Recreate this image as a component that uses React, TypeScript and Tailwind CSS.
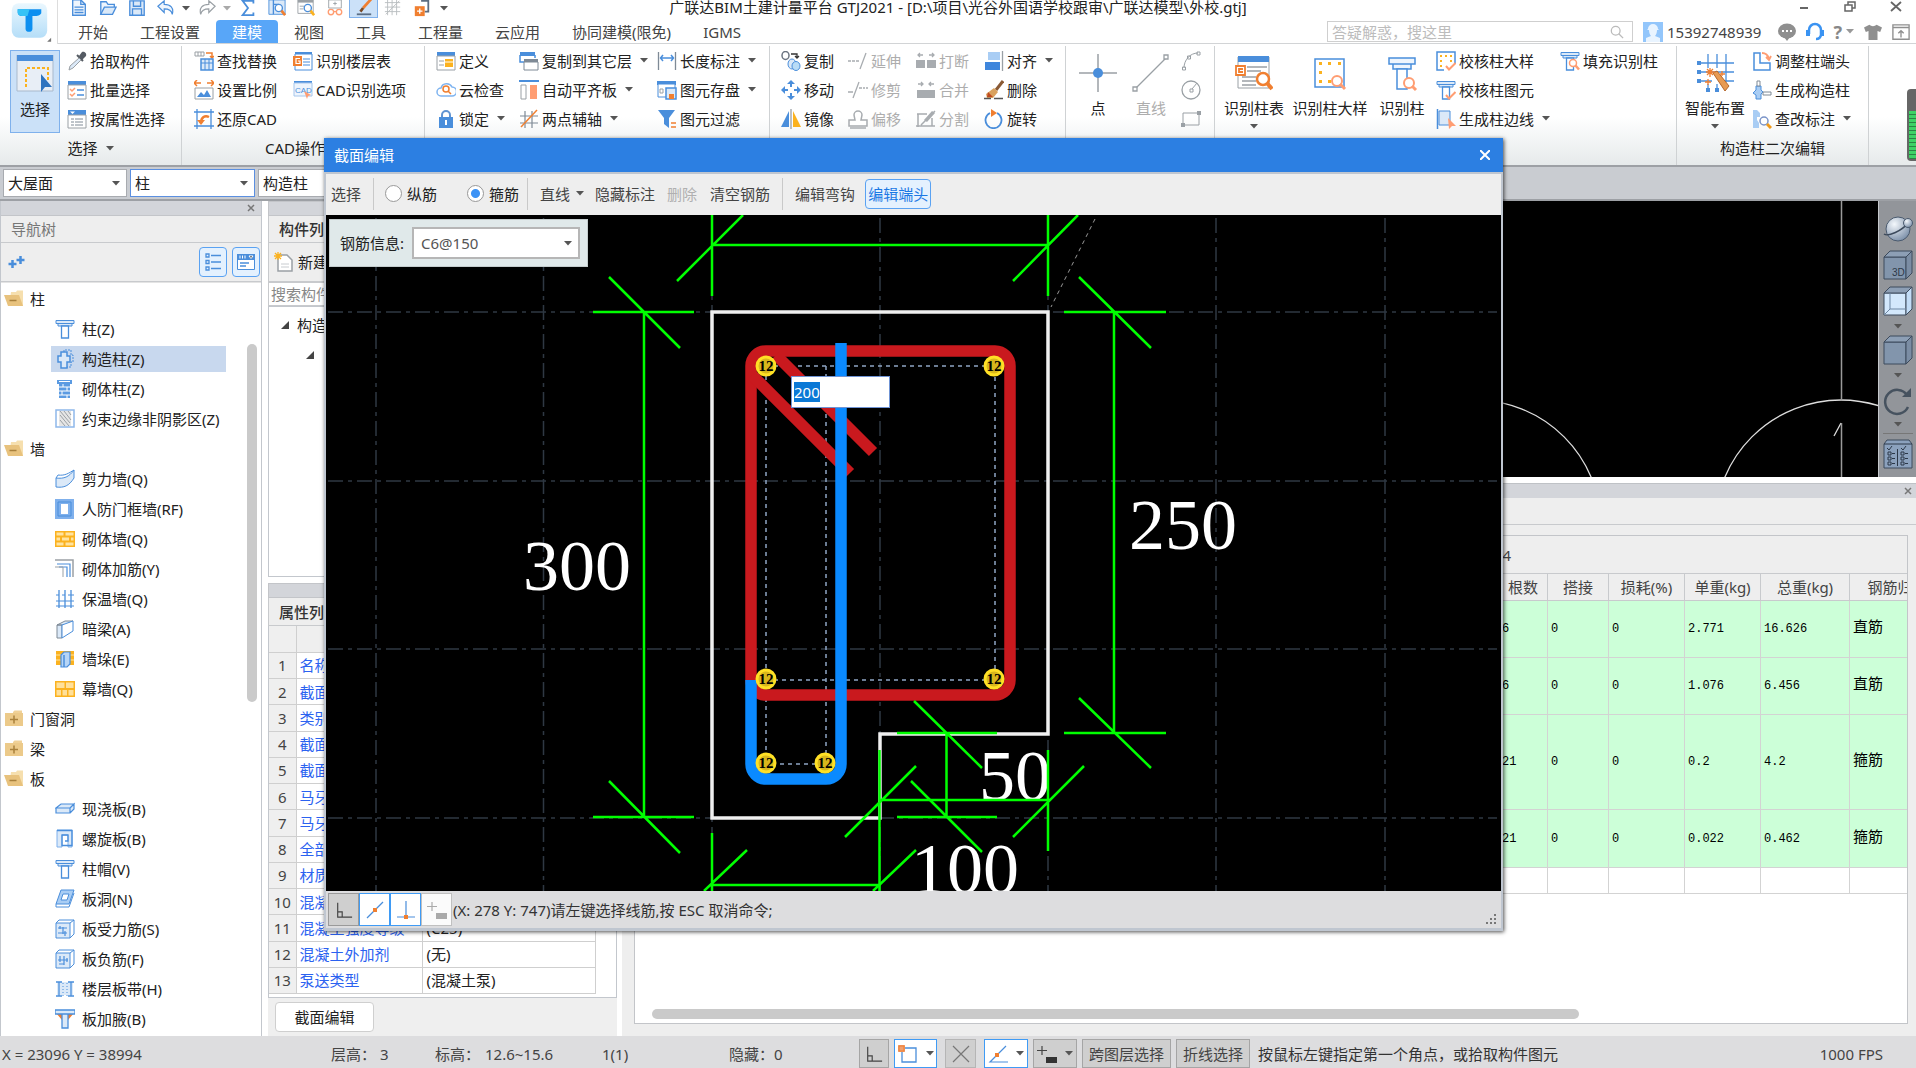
import { useEffect, useRef, type ReactNode } from "react";

const B = "#4a8edb";
const L = "#dbe9f8";
const O = "#f07f30";
const S = "#ff9d72";
const G = "#9aa0a5";
const Y = "#fbb21f";

const line = (d: string, c = B, w = 1.5) => <path d={d} fill="none" stroke={c} strokeWidth={w} />;
const fill = (d: string, c = B) => <path d={d} fill={c} />;

const column = (
  <>
    <path d="M1 1.500h18v3H1zM3 4.500h14v2.500H3z" fill={L} stroke={B} />
    <path d="M6.500 7h7v12h-7z" fill="#fff" stroke={B} strokeWidth="1.300" />
  </>
);
const lens = (
  <>
    <circle cx="13" cy="12" r="3.500" fill="#fff" stroke={S} strokeWidth="1.500" />
    {line("M15.500 14.500L19 18.500", S, 2.5)}
  </>
);
const tick = line("M10 15l3 3.500L19.500 12", S, 2);
const folderOpen = (
  <>
    {fill("M7 3h5l1-1.500h6V17H5z", "#f6dfae")}
    {fill("M0 6h15l4 11H4z", "#e8c27d")}
    {line("M5.500 11.500h7", "#a9813c", 1.5)}
  </>
);
const folderShut = (
  <>
    {fill("M9 3l1.500-1.500H18V4H9z", "#f0d197")}
    {fill("M1 4h18v13H1z", "#ecca8a")}
    {line("M6 10.500h8M10 6.500v8", "#a9813c", 1.5)}
  </>
);
const bricks = (
  <>
    {fill("M0 2h20v16H0z", "#fbb21f")}
    {fill("M1.500 3.500h7v3h-7zM10.500 3.500h8v3h-8zM1.500 8.500h3.500v3H1.500zM7 8.500h7v3H7zM16 8.500h2.500v3H16zM1.500 13.500h7v3h-7zM10.500 13.500h8v3h-8z", "#ffe3a0")}
  </>
);
const cubeFrame = (
  <>
    <path d="M1 4h14v15H1z" fill={L} stroke={B} />
    <path d="M1 4l3-3h15v14l-4 4M15 4l4-3" fill="none" stroke={B} />
  </>
);

const icons: Record<string, ReactNode> = {
  fileNew: <><path d="M3 1h9l5 5v12H3z" fill="#eef5fd" stroke={B} strokeWidth="1.500" />{line("M5 9h10M5 12h10M5 15h10M12 1v5h5")}</>,
  open: <><path d="M2 17V3h6l2 3h7v3" fill="#eef5fd" stroke={B} strokeWidth="1.500" /><path d="M2 17L6 9h13l-4 8z" fill={L} stroke={B} strokeWidth="1.500" /></>,
  save: <><path d="M2 2h16v16H2z" fill={L} stroke={B} strokeWidth="1.500" />{line("M6 2v6h8V2M5 18v-7h10v7")}</>,
  undo: <path d="M1 8l7-6v4c7 0 11 4 9 11-1-5-4-6-9-6v4z" fill="#eef5fd" stroke={B} strokeWidth="1.300" />,
  redo: <path d="M19 8l-7-6v4C5 6 1 10 3 17c1-5 4-6 9-6v4z" fill="#fff" stroke={G} strokeWidth="1.300" />,
  sigma: <path d="M16 5V2H4l6 8-6 8h12v-3" fill="none" stroke={B} strokeWidth="2" />,
  findDoc: <><path d="M1 1h18v16H1z" fill={L} stroke={B} />{line("M6 1v16M6 6h6", B)}<circle cx="12" cy="10" r="4" fill="#fff" stroke={B} strokeWidth="1.500" />{line("M15 13l4 5", O, 3)}</>,
  findView: <><path d="M1 1h17v15H1z" fill="#fff" stroke={G} />{fill("M1 1h17v3H1z", G)}{line("M3 8h5M3 11h4", G, 1)}<circle cx="12" cy="10" r="4" fill="#fff" stroke={B} strokeWidth="1.500" />{line("M15 13l4 5", Y, 3)}</>,
  glasses: <><path d="M3 1h14v9H3z" fill="#fff" stroke={G} />{line("M8 5h4M10 3v4", G, 1)}<circle cx="5.500" cy="14.500" r="3" fill="#fff" stroke={S} strokeWidth="1.500" /><circle cx="14.500" cy="14.500" r="3" fill="#fff" stroke={S} strokeWidth="1.500" />{line("M8.500 14h3", S)}</>,
  brush: <>{line("M18 0L9 10", O, 3)}{line("M9 10l-3 4", "#7a4a26", 3)}{line("M2 17h16", "#5c6f86", 2)}</>,
  gridGray: <>{line("M4 1v17M9 1v17M14 1v17M1 4h17M1 9h17M1 14h17M2 17L17 2", "#b8bcc0", 1)}</>,
  addBox: <>{line("M9 2h8v12h-4", "#5d6d80", 2)}{fill("M2 8h11v11H2z", O)}{line("M7.500 10.500v6M4.500 13.500h6", "#fff", 1.5)}</>,
  picker: <>{fill("M12 5l3-4c2-1 5 1 4 4l-4 4z", "#555b63")}{line("M10 4l6 6", "#555b63", 2)}<path d="M12 7l2 2-8 8-4 2 1-4z" fill={L} stroke={G} /></>,
  batch: <>{fill("M1 1h18v5H1z")}<path d="M1 5h18v14H1z" fill="#fff" stroke={G} />{line("M3 9l2 2 3-3M3 14l2 2 3-3", S, 1.5)}{line("M10 10h7M10 15h7", B)}</>,
  byProp: <>{fill("M1 1h18v6H1z")}<path d="M1 6h18v13H1z" fill="#fff" stroke={G} />{fill("M3 2.500h5L5.500 5z", "#fff")}{line("M4 10h3M8 10h8M4 13h3M8 13h8M4 16h3M8 16h8", "#7f8a96", 1)}</>,
  replace: <>{line("M1 1h9v4H1zM4 1v4M7 1v4", G, 1)}{line("M12 2h6v5M16 5l2 2 2-2", O, 1.5)}<path d="M7 8h12v11H7z" fill={L} stroke={B} strokeWidth="1.500" />{line("M7 12h12M11 8v11M15 8v11", B, 1)}</>,
  scale: <>{line("M0 3h7M3 0L0 3l3 3M13 3h7M17 0l3 3-3 3", O, 1.5)}<path d="M1 8h18v11H1z" fill="#fff" stroke={G} />{fill("M3 17l4-5 3 3 3-5 4 7z")}</>,
  restore: <>{line("M3 0v20M0 3h20M17 0v20M0 17h20", B, 1.3)}{line("M7 14c0-6 4-8 8-6", O, 2.5)}{fill("M3 11h8l-4 5z", O)}</>,
  floorTable: <>{fill("M2 1h17v3H2z")}<path d="M2 3h17v16H2z" fill="#fff" stroke={B} />{line("M10 8h7M10 11h7M10 14h7", B, 1.2)}{fill("M0 5h9v10H0z", O)}{line("M7 7.500H3v5h4V10H5", "#fff", 1.2)}</>,
  cadOpt: <>{fill("M1 1h18v3H1z")}<path d="M1 3h18v13H1z" fill="#eef5fd" stroke="#a6c6ec" /><text x="2" y="13" fontSize="8" fill={B} fontFamily="Liberation Sans">CAD</text>{fill("M11 11l7 4-3 1-1 3z", S)}</>,
  define: <>{fill("M1 1h18v5H1z")}<path d="M1 5h18v14H1z" fill="#fff" stroke={G} />{line("M3 10h5M3 14h5", G, 1)}{fill("M9 8h8v8H9z", Y)}{line("M9 11h8", "#fff", 1)}</>,
  cloud: <><path d="M5 16a4 4 0 010-8 6 6 0 0111-1 4.500 4.500 0 010 9z" fill="#fff" stroke="#7fb4f0" strokeWidth="1.500" /><circle cx="10" cy="9" r="3" fill="none" stroke={O} strokeWidth="1.500" />{line("M12 11l3 3", O, 1.5)}</>,
  lock: <><path d="M6 9V6a4 4 0 018 0v3" fill="none" stroke="#5f93d2" strokeWidth="2" />{fill("M3 8h14v11H3z", "#4a8edb")}{line("M10 11v5", "#fff", 2)}</>,
  copyLayer: <>{fill("M1 1h15v4H1z")}<path d="M1 4v7h4M16 4v3" fill="none" stroke={B} strokeWidth="1.500" />{fill("M5 8h14v4H5z", "#7f8a96")}<path d="M5 11h14v8H5z" fill="#fff" stroke="#7f8a96" /></>,
  alignSlab: <>{line("M0 1h20", B, 2)}<path d="M2 5h5v14H2z" fill="#fff" stroke={G} />{fill("M11 5h7v14h-7z", S)}</>,
  axis: <>{line("M6 2v17M13 2v17M1 7h18M1 14h18", "#7f8a96", 1.2)}{line("M2 18L18 1", O, 1.5)}</>,
  dimension: <>{line("M1.500 1v18M18.500 1v18", "#7f8a96", 1.3)}{line("M4 7h12M6 4L3.500 7 6 10M14 4l2.500 3-2.500 3", B, 1.5)}</>,
  store: <>{fill("M0 1h19v4H0z")}<path d="M1 4h17v13H1z" fill="#fff" stroke={B} />{line("M3 9h3v4H3z", G, 1)}<path d="M9 8h10v11H9z" fill={L} stroke={B} strokeWidth="1.500" />{fill("M12 14h5v5h-5z", O)}</>,
  filter: <>{fill("M1 1h17l-6 8v10l-5-4V9z", "#4a8edb")}{line("M14 14h5M14 18h5", O, 1.5)}</>,
  copy: <><ellipse cx="4.500" cy="4.500" rx="3.500" ry="4" fill="none" stroke="#6b7480" strokeWidth="1.500" />{line("M10 3h6v4M14 5l2 2 2-2", "#333", 1.3)}<ellipse cx="11" cy="13" rx="4" ry="5" fill={L} stroke={B} /><ellipse cx="15" cy="15" rx="4" ry="4.500" fill="#b9dcf6" stroke={B} /></>,
  move: <>{line("M10 2v5M10 13v5M2 10h5M13 10h5", B, 2)}{fill("M10 0l4 4H6zM10 20l4-4H6zM0 10l4-4v8zM20 10l-4-4v8z")}</>,
  mirror: <>{fill("M8 2v16H0z", "#4a8edb")}{line("M10 0v20", G, 1.3)}{fill("M12 2v16h8z", Y)}</>,
  extend: <>{line("M0 10h3M4 10h3M8 10h3", "#a8acb0", 1.3)}{line("M18 2L12 18", "#a8acb0", 1.3)}</>,
  trim: <>{line("M0 12h5M11 8h3M15 8h2M18 8h2", "#a8acb0", 1.3)}{line("M11 2L5 18", "#a8acb0", 1.3)}</>,
  offset: <><path d="M6 6a4 4 0 118 0l-1 5h6v6H1v-6h6z" fill="#fff" stroke="#a8acb0" strokeWidth="1.500" />{line("M2 19h16", "#a8acb0", 1.5)}</>,
  breakIt: <>{fill("M0 9h9v8H0zM11 9h9v8h-9z", "#a8acb0")}{line("M2 4h5M4 2L2 4l2 2M13 4h5M16 2l2 2-2 2", "#a8acb0", 1.3)}</>,
  merge: <>{fill("M1 10h18v8H1z", "#a8acb0")}{line("M2 4h5M5 2l2 2-2 2M13 4h5M15 2l-2 2 2 2", "#a8acb0", 1.3)}</>,
  split: <>{line("M1 5h10M2 5v13M0 17h19M16 9v8M5 16L19 2", "#a8acb0", 1.5)}{fill("M8 11l8-9 3 2-8 9z", "#a8acb0")}</>,
  align: <>{line("M18.500 0v20", G, 1.3)}{fill("M4 1h12v8H4z", "#a9cdf4")}{fill("M1 11h15v8H1z", "#3f86dc")}</>,
  erase: <>{line("M19 1l-7 9", "#8a5a35", 3)}{fill("M10 8l4 4-5 6H3l-1-4z", "#d9a15e")}{fill("M4 12l5 5H3z", "#c04a20")}{line("M0 18.500h7M10 18.500h9", "#555", 1.3)}</>,
  rotate: <><path d="M6 4a8 8 0 107 0" fill="none" stroke={B} strokeWidth="1.800" />{fill("M7 0l6 4-6 4z", O)}</>,
  arc: <>{line("M3 17C3 9 9 2 17 2", G, 1)}{line("M1.500 16h3v3h-3zM6.500 5h3v3h-3zM16 1h3v3h-3z", G, 1)}</>,
  circle: <><circle cx="10" cy="10" r="9" fill="none" stroke={G} strokeWidth="1.300" />{line("M9 9h3v3H9zM11 9l5-6", G, 1)}</>,
  rect: <>{line("M2 4h16v12H2z", G, 1)}{fill("M0 14h4v4H0zM16 2h4v4h-4z", G)}</>,
  checkDetail: <><path d="M1 1h18v18H1z" fill="#fff" stroke={B} strokeWidth="1.500" />{fill("M4 4h2v2H4zM9 4h2v2H9zM14 4h2v2h-2zM4 9h2v2H4zM14 9h2v2h-2zM4 14h2v2H4z", Y)}{fill("M8 13h12v7H8z", "#fff")}{tick}</>,
  checkCol: <>{column}{tick}</>,
  edgeLine: <><path d="M3 2h11v14H3z" fill={L} stroke={B} /><path d="M1.500 0v20" stroke={B} strokeWidth="1.500" />{fill("M12 9l8 8h-4l-3 3z", S)}</>,
  fillCol: <>{column}{lens}</>,
  adjustEnd: <><path d="M2 2h6v10h10v7H2z" fill="#fff" stroke={B} strokeWidth="1.500" />{line("M10 2c4 0 6 2 7 6M14 6l3 3 2-4", S, 1.8)}</>,
  genCol: <><path d="M4 6h5v4l2 2-2 2v5H4v-4l-3-2 3-3z" fill="#a9cdf4" stroke={B} /><path d="M5 1h3v5H5zM11 12h8v3h-8z" fill="#fff" stroke="#7f8a96" /></>,
  checkDim: <>{fill("M1 1h4l3 3v4H5v3l2 3v5H1z", "#a9cdf4")}<circle cx="12" cy="12" r="4" fill="#fff" stroke="#7a94c8" strokeWidth="1.500" />{line("M15 15l4 4", "#f09a1a", 3)}</>,
  folderOpen,
  folderShut,
  column,
  structCol: <><path d="M9 3V1h7v5h2v7h-2v5h-4" fill="none" stroke={B} strokeDasharray="2 1" /><path d="M6 3h6v4h3v6h-3v6H6v-6H3V7h3z" fill={L} stroke={B} strokeWidth="1.500" /></>,
  brickCol: <>{fill("M2 1h15v4H2zM4 5h11v14H4z", "#5b9be2")}{line("M4 8h11M4 12h11M4 16h11M8 5v3M12 8v4M7 12v4M12 16v3", "#fff", 1)}{line("M4 2.500h11", "#fff", 1)}</>,
  hatch: <><path d="M1 1h18v17H1z" fill="#fff" stroke="#8fb8ea" strokeWidth="1.500" />{fill("M4 2h12v15H4z", "#e5e5e5")}{line("M5 2l10 12M5 6l9 11M5 11l5 6M9 2l7 9M13 2l3 4", G, 1)}</>,
  shear: <><path d="M1 9c8 1 13-1 18-8v8C14 17 9 19 1 18z" fill={L} stroke={B} /><path d="M1 9l2-3c7 1 11-2 16-5" fill="none" stroke={B} /></>,
  frameWall: <>{fill("M0 0h19v20H0z", "#7fb0ec")}{line("M3 3h13v14H3z", "#4a8edb", 1)}{fill("M6 5h7v10H6z", "#fff")}</>,
  bricks,
  rebarWall: <>{line("M0 1h18v17", G, 1.5)}{line("M2 5h13v13M4 8h8v10", B, 1.2)}{line("M0 8h8v10", G, 1)}</>,
  insul: <>{line("M4 1v18M10 1v18M16 1v18", B, 1.3)}{line("M1 6h3M7 6h3M13 6h6M1 12h18M1 17h18", B, 1)}</>,
  hiddenBeam: <><path d="M2 6l8-4h8l-8 4zM2 6h5v13H2z" fill={L} stroke="#7f8a96" /><path d="M7 6l11-4v10L7 19z" fill="#fff" stroke={B} /></>,
  pier: <>{fill("M1 2h18v14H1z", "#fbb21f")}{line("M1 6h18M1 11h18", "#ffe3a0", 1)}<path d="M6 6l3-3h6v12l-3 3H6z" fill="#b6d5f6" stroke={B} strokeWidth="1.200" />{line("M9 6v12", B)}</>,
  curtain: <>{fill("M0 2h20v16H0z", "#fbb21f")}{fill("M1.500 3.500h8v5.500h-8zM11 3.500h7.500v5.500H11zM1.500 11h4.500v5.500H1.500zM7.500 11h4.500v5.500H7.500zM13.500 11h5v5.500h-5z", "#ffe09a")}</>,
  slab: <path d="M1 9l5-4h13l-4 4zM1 9h14v5H1zM15 9l4-4v5l-4 4" fill={L} stroke={B} strokeWidth="1.200" />,
  spiral: <><path d="M2 1h15v17h-4V6H7v12H2z" fill={L} stroke="#7fb0ec" />{line("M2 1.500h15v15H7V6h6v6h-3", B, 1.3)}</>,
  slabHole: <><path d="M6 1h13l-5 14H1z" fill="#a9cdf4" stroke={B} /><path d="M1 15v3h13l5-14" fill="none" stroke={B} /><path d="M8 5h6l-2 6H6z" fill="#fff" stroke={B} /></>,
  slabRebar: <>{cubeFrame}{line("M3 9h9M3 14h9M5 7v3M10 12v5M8 8v7", B, 1.2)}</>,
  slabNeg: <>{cubeFrame}{line("M3 11h10M5 7v6M9 7v9M12 9v4M4 15h5", B, 1.2)}</>,
  band: <>{fill("M2 3h16v13H2z", L)}{line("M1 3h6M13 3h6M1 17h6M13 17h6M4 3v14M16 3v14", B, 1.3)}<path d="M8 4v13M12 4v13" stroke={B} strokeDasharray="1 2" /></>,
  haunch: <>{fill("M1 4l6 7V4zM19 4l-6 7V4z", O)}<path d="M0 1h20v4H0zM7 5h6v14H7z" fill={L} stroke={B} strokeWidth="1.300" /></>,
  newDoc: <><path d="M4 3h9l5 5v11H4z" fill="#fff" stroke={G} strokeWidth="1.500" />{line("M7 12h8M7 15h8", "#c8ccd0", 1)}{line("M4 0v8M0 4h8M1 1l6 6M7 1L1 7", Y, 1.3)}</>,
  ortho: <>{line("M3 2v16h16M3 12h5v6", "#444", 1.3)}</>,
  snapBox: <><path d="M4 4h14v14H4z" fill="#fff" stroke={B} strokeWidth="1.300" />{fill("M0 1h7v7H0z", "#f0a070")}{line("M1 2h5v5H1z", O, 1)}</>,
  cross: <>{line("M2 2l16 16M18 2L2 18", "#777", 1.2)}</>,
  nearLine: <>{line("M2 18L18 2", B, 1.2)}{fill("M8 8h4v4H8z", O)}</>,
  perp: <>{line("M10 1v16M1 17h18", B, 1.2)}{fill("M8 15h4v4H8z", O)}</>,
  angle: <>{line("M18 2L2 18h18", B, 1.2)}{fill("M7 9h4v4H7z", O)}</>,
  dyn: <>{line("M5 2v9M0 6.500h10", "#444", 1.2)}{fill("M9 13h11v6H9z", "#333")}</>,
  dynOff: <>{line("M5 2v9M0 6.500h10", "#aaa", 1.2)}{fill("M9 13h11v6H9z", "#aaa")}</>,
  chat: <><ellipse cx="10" cy="9" rx="9" ry="7.500" fill="#8f8f8f" />{fill("M7 15l3 4 3-4z", "#8f8f8f")}{fill("M5 8h2v2H5zM9 8h2v2H9zM13 8h2v2h-2z", "#fff")}</>,
  headset: <><path d="M4 12V8a6 6 0 0112 0v5a5 5 0 01-5 4" fill="none" stroke="#3a93f2" strokeWidth="2.500" />{fill("M1 8h4v6H1zM15 8h4v6h-4z", "#3a93f2")}</>,
  shirt: <>{fill("M6 2c2 2 6 2 8 0l6 3-2 5-3-1v10H5V9l-3 1-2-5z", "#8f8f8f")}</>,
  boxUp: <>{line("M1 2h18v16H1zM1 5h18", "#8f8f8f", 1.5)}{line("M10 16V9M7 11.500L10 8.500l3 3", "#8f8f8f", 1.5)}</>,
};

const Icon = ({ name, className = "size-5" }: { name: string; className?: string }) => (
  <svg viewBox="0 0 20 20" className={`${className} shrink-0`} aria-hidden="true">
    {icons[name]}
  </svg>
);

const Caret = ({ className = "" }: { className?: string }) => (
  <svg viewBox="0 0 8 5" className={`h-[5px] w-2 shrink-0 text-[#555] ${className}`} aria-hidden="true">
    <path d="M0 0h8L4 4.500z" fill="currentColor" />
  </svg>
);

const Item = ({ icon, label, caret, off }: { icon: string; label: string; caret?: boolean; off?: boolean }) => (
  <button className={`flex h-[29px] items-center whitespace-nowrap ${off ? "text-[#adadad]" : ""}`} disabled={off}>
    <Icon name={icon} />
    <span className="ml-[3px]">{label}</span>
    {caret && <Caret className="ml-2" />}
  </button>
);

const Group = ({ className, pad = "", label, caret, children }: { className: string; pad?: string; label?: string; caret?: boolean; children: ReactNode }) => (
  <div className={`flex shrink-0 flex-col border-r border-[#cfd2d4] ${className}`}>
    <div className={`flex ${pad}`}>{children}</div>
    {label && (
      <div className="flex h-[30px] items-center justify-center gap-2">
        {label}
        {caret && <Caret />}
      </div>
    )}
  </div>
);

const Big = ({ label, caret, off, className, children }: { label: string; caret?: boolean; off?: boolean; className: string; children: ReactNode }) => (
  <button className={`flex h-[83px] flex-col items-center whitespace-nowrap ${off ? "text-[#adadad]" : ""} ${className}`}>
    <svg viewBox="0 0 38 38" className="mt-1 size-[38px] shrink-0" aria-hidden="true">
      {children}
    </svg>
    <span className="mt-1 leading-6">{label}</span>
    {caret && <Caret className="mt-1" />}
  </button>
);

const Ribbon = () => (
  <div className="flex h-[123px] overflow-hidden border-b-2 border-[#9da0a5] bg-linear-to-b from-white from-60% to-[#e6eaeb] pt-[2px]">
    <Group className="w-[182px]" label="选择" caret>
      <div className="ml-[10px] flex h-[87px] pt-1">
        <Big label="选择" className="w-[50px] border border-[#7fb1ec] bg-[#cbe1f8]">
          <path d="M1 0h36v36H1z" fill="#e8eef6" stroke="#a9b9cc" />
          <path d="M1 0h36v6H1z" fill={B} />
          <path d="M10 32V13h22v14" fill="none" stroke={Y} strokeWidth="2" strokeDasharray="3 2" />
          <path d="M25 19l11 13h-7l-4 5z" fill="#2f74c0" />
        </Big>
      </div>
      <div className="ml-[7px]">
        <Item icon="picker" label="拾取构件" />
        <Item icon="batch" label="批量选择" />
        <Item icon="byProp" label="按属性选择" />
      </div>
    </Group>
    <Group className="w-[243px]" pad="pl-3" label="CAD操作" caret>
      <div className="w-[99px]">
        <Item icon="replace" label="查找替换" />
        <Item icon="scale" label="设置比例" />
        <Item icon="restore" label="还原CAD" />
      </div>
      <div>
        <Item icon="floorTable" label="识别楼层表" />
        <Item icon="cadOpt" label="CAD识别选项" />
      </div>
    </Group>
    <Group className="w-[345px]" pad="pl-[11px]">
      <div className="w-[83px]">
        <Item icon="define" label="定义" />
        <Item icon="cloud" label="云检查" />
        <Item icon="lock" label="锁定" caret />
      </div>
      <div className="w-[138px]">
        <Item icon="copyLayer" label="复制到其它层" caret />
        <Item icon="alignSlab" label="自动平齐板" caret />
        <Item icon="axis" label="两点辅轴" caret />
      </div>
      <div>
        <Item icon="dimension" label="长度标注" caret />
        <Item icon="store" label="图元存盘" caret />
        <Item icon="filter" label="图元过滤" />
      </div>
    </Group>
    <Group className="w-[296px]" pad="pl-[11px]">
      <div className="w-[67px]">
        <Item icon="copy" label="复制" />
        <Item icon="move" label="移动" />
        <Item icon="mirror" label="镜像" />
      </div>
      <div className="w-[68px]">
        <Item icon="extend" label="延伸" off />
        <Item icon="trim" label="修剪" off />
        <Item icon="offset" label="偏移" off />
      </div>
      <div className="w-[68px]">
        <Item icon="breakIt" label="打断" off />
        <Item icon="merge" label="合并" off />
        <Item icon="split" label="分割" off />
      </div>
      <div>
        <Item icon="align" label="对齐" caret />
        <Item icon="erase" label="删除" />
        <Item icon="rotate" label="旋转" />
      </div>
    </Group>
    <Group className="w-[149px]" pad="pl-3">
      <Big label="点" className="mt-1 w-10">
        <path d="M19 0v38M0 19h38" stroke={G} strokeWidth="1.500" />
        <circle cx="19" cy="19" r="5" fill={B} />
      </Big>
      <Big label="直线" off className="mt-1 ml-2 w-[50px]">
        <path d="M4 34L34 4" stroke={G} strokeWidth="1.300" />
        <path d="M1 33h4v4H1zM32 1h4v4h-4z" fill="#fff" stroke={G} strokeWidth="1.300" />
      </Big>
      <div className="ml-[5px] flex flex-col">
        {["arc", "circle", "rect"].map((n) => (
          <button key={n} className="flex h-[29px] items-center" aria-label={n}>
            <Icon name={n} />
          </button>
        ))}
      </div>
    </Group>
    <Group className="w-[462px]" pad="pl-[9px]">
      <Big label="识别柱表" caret className="mt-1 w-[60px]">
        <path d="M3 3h31v31H3z" fill="#fff" stroke={G} />
        <path d="M3 2h31v6H3z" fill={B} />
        <path d="M12 13h20M12 17h14M7 23h14M7 27h14M7 31h14" stroke={G} strokeWidth="1.300" />
        <path d="M1 12h9v9H1zM8 15H4v3h4" fill="#fff" stroke={O} strokeWidth="1.800" />
        <circle cx="28" cy="25" r="6" fill="#fff" stroke={O} strokeWidth="2.500" />
        <path d="M32 29l5 6" stroke={O} strokeWidth="4" />
      </Big>
      <Big label="识别柱大样" className="mt-1 ml-2 w-[76px]">
        <path d="M4 5h29v28H4z" fill="#fff" stroke={B} strokeWidth="1.500" />
        <path d="M8 8h3v3H8zM17 8h3v3h-3zM27 8h3v3h-3zM8 17h3v3H8zM8 26h3v3H8zM17 26h3v3h-3z" fill={Y} />
        <circle cx="26" cy="27" r="5" fill="#fff" stroke={S} strokeWidth="2" />
        <path d="M29 30l5 5" stroke={S} strokeWidth="3" />
      </Big>
      <Big label="识别柱" className="mt-1 ml-[10px] w-12">
        <path d="M6 4h26v6H6zM10 10h18v5H10z" fill="#eef5fd" stroke={B} strokeWidth="1.500" />
        <path d="M14 15h10v20H14z" fill="#fff" stroke={B} strokeWidth="1.500" />
        <circle cx="26" cy="29" r="5" fill="#fff" stroke={S} strokeWidth="2" />
        <path d="M29 32l4 4" stroke={S} strokeWidth="3" />
      </Big>
      <div className="ml-[10px] w-[124px]">
        <Item icon="checkDetail" label="校核柱大样" />
        <Item icon="checkCol" label="校核柱图元" />
        <Item icon="edgeLine" label="生成柱边线" caret />
      </div>
      <div>
        <Item icon="fillCol" label="填充识别柱" />
      </div>
    </Group>
    <Group className="w-[192px]" pad="pl-[7px]" label="构造柱二次编辑">
      <Big label="智能布置" caret className="mt-1 w-[62px]">
        <path d="M12 0v14M21 0v14M30 0v28M2 9h36M2 18h36M2 27h14M28 27h10M12 30v7M21 30v7" stroke={B} strokeWidth="1.300" />
        <path d="M1 7h4v4H1zM1 16h4v4H1zM1 25h4v4H1zM10 34h4v4h-4zM19 34h4v4h-4z" fill={B} />
        <path d="M17 19l4-2 12 15-4 5z" fill="#e79a52" stroke="#b3662b" />
        <path d="M14 14v9M10 18h9M11 15l6 6M17 15l-6 6M26 17v5M24 20h5M12 25v6M9 28h6" stroke={O} strokeWidth="1.300" />
      </Big>
      <div className="ml-[6px]">
        <Item icon="adjustEnd" label="调整柱端头" />
        <Item icon="genCol" label="生成构造柱" />
        <Item icon="checkDim" label="查改标注" caret />
      </div>
    </Group>
  </div>
);

const Header = () => (
  <header className="relative h-11 border-b border-[#d2d4d6] bg-white">
    <div className="flex h-5 items-start">
      <div className="flex h-4 flex-1 items-center">
        <span className="w-16 shrink-0" />
        {["fileNew", "open", "save", "undo"].map((n) => (
          <button key={n} className="flex w-[29px] justify-center" aria-label={n}><Icon name={n} className="size-[18px]" /></button>
        ))}
        <Caret className="mx-[2px]" />
        <button className="flex w-[29px] justify-center" aria-label="redo"><Icon name="redo" className="size-[18px]" /></button>
        <Caret className="mx-[2px] opacity-50" />
        {["sigma", "findDoc", "findView", "glasses"].map((n) => (
          <button key={n} className="flex w-[29px] justify-center" aria-label={n}><Icon name={n} className="size-[18px]" /></button>
        ))}
        <button className="flex h-5 w-[29px] items-center justify-center border border-[#7fb1ec] bg-[#cbe1f8]" aria-label="brush"><Icon name="brush" className="size-[18px]" /></button>
        {["gridGray", "addBox"].map((n) => (
          <button key={n} className="flex w-[29px] justify-center" aria-label={n}><Icon name={n} className="size-[18px]" /></button>
        ))}
        <Caret className="ml-1" />
      </div>
      <h1 className="leading-[15px] whitespace-nowrap">广联达BIM土建计量平台 GTJ2021 - [D:\项目\光谷外国语学校跟审\广联达模型\外校.gtj]</h1>
      <div className="flex h-3 flex-1 items-center justify-end gap-[34px] text-[#666]">
        <button aria-label="最小化"><svg viewBox="0 0 12 12" className="size-3"><path d="M2 8h8" stroke="currentColor" strokeWidth="2" /></svg></button>
        <button aria-label="还原"><svg viewBox="0 0 12 12" className="size-3"><path d="M1 5h7v6H1zM4 5V2h7v6H8" fill="none" stroke="currentColor" strokeWidth="1.500" /></svg></button>
        <button className="mr-[14px]" aria-label="关闭"><svg viewBox="0 0 12 12" className="size-3"><path d="M1 2l10 9M11 2L1 11" stroke="currentColor" strokeWidth="1.800" /></svg></button>
      </div>
    </div>
    <nav className="flex h-[23px] items-end pl-[62px] text-[#444]">
      <div className="flex">
        {["开始", "工程设置", "建模", "视图", "工具", "工程量", "云应用", "协同建模(限免)", "IGMS"].map((t) => (
          <button key={t} className={`h-[23px] px-4 whitespace-nowrap ${t === "建模" ? "rounded-t bg-[#58a6f8] text-white" : ""}`}>{t}</button>
        ))}
      </div>
      <div className="ml-auto flex h-[23px] items-center pr-[6px]">
        <label className="flex h-[21px] w-[306px] items-center border border-[#cfcfcf] bg-white pr-2 pl-1">
          <input className="min-w-0 flex-1 outline-none placeholder:text-[#bcbcbc]" placeholder="答疑解惑，搜这里" aria-label="搜索" />
          <svg viewBox="0 0 16 16" className="size-[14px]"><circle cx="6.500" cy="6.500" r="5" fill="none" stroke="#bbb" strokeWidth="1.500" /><path d="M10 10l5 5" stroke="#bbb" strokeWidth="1.500" /></svg>
        </label>
        <svg viewBox="0 0 20 20" className="ml-[10px] size-5"><path d="M0 0h20v20H0z" fill="#93c6fb" /><path d="M5 7a5 5 0 0110 0l1 1H4zM6 8h8c0 3-1 5-2 6l5 2v4H3v-4l5-2c-1-1-2-3-2-6z" fill="#e9f4ff" /></svg>
        <span className="ml-1">15392748939</span>
        <button className="ml-4" aria-label="消息"><Icon name="chat" className="size-5" /></button>
        <button className="ml-2" aria-label="客服"><Icon name="headset" className="size-5" /></button>
        <button className="ml-2 flex items-center gap-1 text-lg leading-5 font-bold text-[#888]" aria-label="帮助">?<Caret className="opacity-60" /></button>
        <button className="ml-[10px]" aria-label="皮肤"><Icon name="shirt" className="size-[18px]" /></button>
        <button className="ml-[10px]" aria-label="折叠"><Icon name="boxUp" className="size-[18px]" /></button>
      </div>
    </nav>
    <button className="absolute top-0 left-0 flex h-11 w-[58px] justify-center border-r border-[#ddd] bg-white" aria-label="主菜单">
      <svg viewBox="0 0 58 44" className="h-11 w-[58px]">
        <defs><linearGradient id="lg" x1="0" y1="0" x2="0" y2="1"><stop offset="0" stopColor="#eaf7fe" /><stop offset="1" stopColor="#b5def8" /></linearGradient></defs>
        <rect x="12" y="3" width="36" height="35" rx="7" fill="url(#lg)" />
        <path d="M18 9h24v4c-2 3-5 3-9 3v13c0 4-7 4-7 0V16c-4 0-8 0-8-4z" fill="#0d8ff0" />
        <path d="M18 9h12l-2 7c-5 0-10 0-10-4z" fill="#37c3f6" />
        <path d="M52 38v4h-4z" fill="#777" />
      </svg>
    </button>
  </header>
);

const Combo = ({ value, className, label }: { value: string; className: string; label: string }) => (
  <div className={`relative h-7 border bg-white ${className}`}>
    <select aria-label={label} className="size-full appearance-none pl-1 outline-none"><option>{value}</option></select>
    <Caret className="pointer-events-none absolute top-[11px] right-[6px]" />
  </div>
);

const tree: [string, string][] = [
  ["folderOpen", "柱"], ["column", "柱(Z)"], ["structCol", "构造柱(Z)"], ["brickCol", "砌体柱(Z)"], ["hatch", "约束边缘非阴影区(Z)"],
  ["folderOpen", "墙"], ["shear", "剪力墙(Q)"], ["frameWall", "人防门框墙(RF)"], ["bricks", "砌体墙(Q)"], ["rebarWall", "砌体加筋(Y)"],
  ["insul", "保温墙(Q)"], ["hiddenBeam", "暗梁(A)"], ["pier", "墙垛(E)"], ["curtain", "幕墙(Q)"], ["folderShut", "门窗洞"], ["folderShut", "梁"],
  ["folderOpen", "板"], ["slab", "现浇板(B)"], ["spiral", "螺旋板(B)"], ["column", "柱帽(V)"], ["slabHole", "板洞(N)"], ["slabRebar", "板受力筋(S)"],
  ["slabNeg", "板负筋(F)"], ["band", "楼层板带(H)"], ["haunch", "板加腋(B)"],
];

const CloseX = () => (
  <svg viewBox="0 0 8 8" className="size-2"><path d="M1 1l6 6M7 1L1 7" stroke="#777" strokeWidth="1.500" /></svg>
);

const NavTree = () => (
  <aside className="flex w-[262px] shrink-0 flex-col border-x border-[#c3c7cd] bg-white">
    <div className="flex h-[15px] items-center justify-end border-b border-[#c3c5c9] bg-[#d3d5da] pr-[6px]"><button aria-label="关闭导航树"><CloseX /></button></div>
    <h2 className="h-[27px] border-b border-[#c8cacd] bg-[#eeeeee] pl-[10px] leading-[26px] text-[#777]">导航树</h2>
    <div className="flex h-[39px] items-center border-b border-[#c8cacd] bg-[#eeeeee] pr-[1px] pl-[7px]">
      <button aria-label="展开"><svg viewBox="0 0 18 14" className="h-[14px] w-[18px]"><path d="M4.500 5v8M.5 9h8M12.500 1v8M8.500 5h8" stroke={B} strokeWidth="2.500" /></svg></button>
      <button className="ml-auto flex h-[30px] w-7 items-center justify-center rounded border border-[#5aa2f2] bg-[#e4f1fe]" aria-label="列表">
        <svg viewBox="0 0 16 18" className="h-[18px] w-4"><path d="M1 1h3v3H1zM1 7.500h3v3H1zM1 14h3v3H1zM6 2.500h10M6 9h10M6 15.500h10" fill="none" stroke={B} strokeWidth="1.300" /></svg>
      </button>
      <button className="ml-[5px] flex h-[30px] w-7 items-center justify-center rounded border border-[#5aa2f2] bg-[#e4f1fe]" aria-label="窗口">
        <svg viewBox="0 0 18 16" className="h-4 w-[18px]"><path d="M.5.5h17v15H.5z" fill="#fff" stroke={B} /><path d="M0 0h18v6H0z" fill={B} /><path d="M3 1.500v3M5.500 1.500v3M8 1.500v3M12 2h4l-2 2.500z" stroke="#fff" /><path d="M3 9h9M3 12h6" stroke={B} strokeWidth="1.300" /></svg>
      </button>
    </div>
    <div className="flex min-h-0 flex-1 overflow-hidden border-t border-[#e4e4e4]">
      <ul className="flex-1 pt-px">
        {tree.map(([icon, label]) => {
          const top = icon.startsWith("folder");
          return (
            <li key={label} className={`flex h-[30px] items-center ${top ? "pl-[3px]" : "pl-[50px]"}`}>
              <button className={`flex h-[26px] items-center whitespace-nowrap ${top ? "gap-[6px]" : "w-[175px] gap-[7px] pl-1"} ${label === "构造柱(Z)" ? "bg-[#c8d8ee]" : ""}`}>
                <Icon name={icon} />
                {label}
              </button>
            </li>
          );
        })}
      </ul>
      <div className="mt-[61px] mr-1 h-[358px] w-[10px] rounded-full bg-[#cacaca]" />
    </div>
  </aside>
);

const props: [string, string][] = [
  ["名称", ""], ["截面形状", ""], ["类别", ""], ["截面宽度", ""], ["截面高度", ""], ["马牙槎设置", ""], ["马牙槎宽度", ""],
  ["全部纵筋", ""], ["材质", ""], ["混凝土类型", ""], ["混凝土强度等级", "(C25)"], ["混凝土外加剂", "(无)"], ["泵送类型", "(混凝土泵)"],
];

const Lists = () => (
  <section className="flex w-[349px] shrink-0 flex-col">
    <div className="h-[15px] border border-[#c3c5c9] bg-[#d3d5da]" />
    <h2 className="h-[27px] border-x border-b border-[#c8cacd] bg-[#eeeeee] pl-[10px] leading-[27px] font-medium text-[#333]">构件列表</h2>
    <div className="flex h-[39px] items-center border-x border-b border-[#c8cacd] bg-[#eeeeee] pl-[5px]">
      <button className="flex items-center gap-1"><Icon name="newDoc" />新建</button>
    </div>
    <input className="h-6 border border-[#c8cacd] bg-white pl-[2px] placeholder:text-[#888]" placeholder="搜索构件..." aria-label="搜索构件" />
    <ul className="h-[271px] border border-[#c3c7cd] bg-white pt-[3px]">
      <li className="flex h-[30px] items-center gap-2 pl-3"><svg viewBox="0 0 8 8" className="size-2"><path d="M8 0v8H0z" fill="#444" /></svg>构造柱</li>
      <li className="flex h-[30px] items-center pl-[37px]"><svg viewBox="0 0 8 8" className="size-2"><path d="M8 0v8H0z" fill="#444" /></svg></li>
    </ul>
    <div className="mt-[6px] h-[15px] border border-[#c3c5c9] bg-[#d3d5da]" />
    <h2 className="h-7 border-x border-b border-[#c8cacd] bg-[#eeeeee] pl-[10px] leading-[28px] font-medium text-[#333]">属性列表</h2>
    <div className="min-h-0 flex-1 overflow-hidden border-x border-b border-[#c3c7cd] bg-white pr-5">
      <table className="h-[368px] w-full table-fixed border-collapse">
        <colgroup><col className="w-[27px]" /><col className="w-[126px]" /><col /></colgroup>
        <tbody>
          <tr className="h-[26px] bg-[#efefef]"><th className="border-r border-b border-[#cfcfcf]" /><th className="border-r border-b border-[#cfcfcf]" /><th className="border-r border-b border-[#cfcfcf]" /></tr>
          {props.map(([k, v], i) => (
            <tr key={k} className="h-[26px]">
              <td className="border-r border-b border-[#cfcfcf] bg-[#efefef] text-center leading-5 text-[#444]">{i + 1}</td>
              <td className="border-r border-b border-[#cfcfcf] pl-[3px] leading-5 whitespace-nowrap text-[#2b62f0]">{k}</td>
              <td className="border-r border-b border-[#cfcfcf] pl-1 leading-5">{v}</td>
            </tr>
          ))}
        </tbody>
      </table>
    </div>
    <div className="flex h-[38px] items-center bg-[#efefef] pl-[7px]">
      <button className="h-[30px] w-[99px] rounded border border-[#cfcfcf] bg-white">截面编辑</button>
    </div>
  </section>
);

const Cube = ({ light, text }: { light?: boolean; text?: string }) => (
  <svg viewBox="0 0 30 30" className="size-[30px]">
    <path d="M1 7h22v22H1z" fill={light ? "#d3e8fc" : "#8295ac"} stroke="#3c4a5c" />
    <path d="M1 7l6-6h22L23 7z" fill="#8d9fb5" stroke="#3c4a5c" />
    <path d="M23 7l6-6v22l-6 6z" fill={light ? "#c2dcf6" : "#7b8da4"} stroke="#3c4a5c" />
    {light && <path d="M7 7v16h16M1 29l6-6" fill="none" stroke="#6d86a2" />}
    {text && <text x="9" y="26" fontSize="10" fontFamily="Liberation Sans" fill="#2c3848">{text}</text>}
  </svg>
);

const Viewport = () => (
  <div className="flex h-[276px] bg-black">
    <svg viewBox="1503 200 375 276" className="ml-auto h-[276px] w-[375px]">
      <g fill="none" stroke="#ddd" strokeWidth="1.300">
        <circle cx="1475" cy="525" r="126" />
        <circle cx="1841" cy="525" r="126" />
        <path d="M1834 435l7-13" />
      </g>
      <path d="M1841.500 200v199M1841.500 422v54" stroke="#9a9a9a" strokeWidth="1.500" />
    </svg>
    <div className="flex w-[38px] flex-col items-center border-l border-[#c5c8cc] bg-[#92959a] pt-[11px]">
      <svg viewBox="0 0 30 30" className="h-8 w-[30px]"><defs><radialGradient id="gl" cx=".35" cy=".3" r=".8"><stop offset="0" stopColor="#f4f8fc" /><stop offset="1" stopColor="#7388a3" /></radialGradient></defs><circle cx="15" cy="16" r="12" fill="url(#gl)" stroke="#4a5a6e" /><path d="M1 21c4 3 18-3 25-12" fill="none" stroke="#3c4a5c" strokeWidth="1.500" /><circle cx="25" cy="10" r="4.500" fill="url(#gl)" stroke="#4a5a6e" /></svg>
      <div className="mt-[6px]"><Cube text="3D" /></div>
      <div className="mt-[6px]"><Cube light /></div>
      <Caret className="mt-2" />
      <div className="mt-[6px]"><Cube /></div>
      <Caret className="mt-2" />
      <svg viewBox="0 0 30 30" className="mt-2 size-[30px]"><path d="M25 21a12 12 0 11-1-12" fill="none" stroke="#46525f" strokeWidth="2.500" /><path d="M28 2v9h-9z" fill="#46525f" /></svg>
      <Caret className="mt-[6px]" />
      <div className="mt-[6px] h-px w-[30px] bg-[#777]" />
      <svg viewBox="0 0 30 30" className="mt-[5px] size-[30px]"><path d="M1 5l3-4h22l3 4v24H1z" fill="#8ba1bd" stroke="#3c4a5c" /><path d="M1 5h28M14.500 10v17M4 9l2 2 3-4M18 9l2 2 3-4" fill="none" stroke="#2c3848" /><path d="M5 13h3v3H5zM5 18h3v3H5zM5 23h3v3H5zM18 13h3v3h-3zM18 18h3v3h-3zM18 23h3v3h-3zM9 14.500h3M9 19.500h3M9 24.500h3M22 14.500h3M22 19.500h3M22 24.500h3" fill="none" stroke="#2c3848" /></svg>
    </div>
  </div>
);

const rows: [string, string[]][] = [
  ["h-[57px]", ["6", "0", "0", "2.771", "16.626", "直筋"]],
  ["h-[57px]", ["6", "0", "0", "1.076", "6.456", "直筋"]],
  ["h-[95px]", ["21", "0", "0", "0.2", "4.2", "箍筋"]],
  ["h-[58px]", ["21", "0", "0", "0.022", "0.462", "箍筋"]],
];

const RebarTable = () => (
  <section className="mt-[6px] flex min-h-0 flex-1 flex-col bg-[#eeeeee]">
    <div className="flex h-[15px] items-center justify-end border-t border-[#bfc2c6] bg-[#d3d5da] pr-1"><button aria-label="关闭"><CloseX /></button></div>
    <div className="h-[27px] border-b border-[#c8cacd]" />
    <div className="mx-3 mt-[10px] mr-2 mb-3 flex min-h-0 flex-1 flex-col overflow-hidden border border-[#c3c5c9] bg-white">
      <div className="flex h-[37px] shrink-0 items-center justify-end bg-[#eeeeee] pr-[396px] text-[#444]">单构件钢筋总重(kg)：27.744</div>
      <div className="flex-1">
        <table className="w-[calc(100%+39px)] table-fixed border-collapse">
          <colgroup><col className="w-[10px]" /><col /><col className="w-[49px]" /><col className="w-[61px]" /><col className="w-[76px]" /><col className="w-[76px]" /><col className="w-[89px]" /><col className="w-24" /></colgroup>
          <thead>
            <tr className="h-[27px] bg-[#eeeeee] text-[#444]">
              {["", "", "根数", "搭接", "损耗(%)", "单重(kg)", "总重(kg)", "钢筋归类"].map((h, i) => (
                <th key={i} className="border border-[#c8cacd] leading-5 font-normal whitespace-nowrap">{h}</th>
              ))}
            </tr>
          </thead>
          <tbody className="font-['Liberation_Mono','Noto_Sans_CJK_SC',monospace] text-xs text-black">
            {rows.map(([h, cells], r) => (
              <tr key={r} className={`${h} bg-[#ccffd8]`}>
                <td className="bg-[#eeeeee]" />
                <td />
                {cells.map((c, i) => (
                  <td key={i} className={`border border-[#d3d3d3] pl-[3px] ${i === 5 ? "text-[15px]" : ""}`}>{c}</td>
                ))}
              </tr>
            ))}
            <tr className="h-[26px] bg-white">
              {[0, 1, 2, 3, 4, 5, 6, 7].map((i) => <td key={i} className="border border-[#d3d3d3]" />)}
            </tr>
          </tbody>
        </table>
      </div>
      <div className="mr-[328px] mb-1 ml-[17px] h-[10px] shrink-0 rounded-full bg-[#cacaca]" />
    </div>
  </section>
);

const bars = [[766, 366], [994, 366], [766, 679], [994, 679], [766, 763], [825, 763]];

const Drawing = () => (
  <svg viewBox="326 215 1175 676" className="block w-full bg-black">
    <g stroke="#2f3843" strokeWidth="1.500" strokeDasharray="15 5 4 5">
      {[376, 543.5, 712, 880, 1048, 1216, 1385].map((x) => <path key={x} d={`M${x} 218V891`} />)}
      {[312, 481, 649, 818].map((y) => <path key={y} d={`M328 ${y}H1497`} />)}
    </g>
    <path d="M1095 219L1051 307" stroke="#999" strokeDasharray="4 4" />
    <path d="M766 366H995V680H766zM826 366V764H766V680" fill="none" stroke="#8ea5c4" strokeWidth="1.500" strokeDasharray="4 4" />
    <path d="M712 312h336v422H880v84H712z" fill="none" stroke="#f0f0f0" strokeWidth="3.500" />
    <g fill="none" stroke="#c9191e" strokeWidth="11.500">
      <path d="M751 680V366a15 15 0 0115-15H995a15 15 0 0115 15V680a15 15 0 01-15 15H766a15 15 0 01-15-15" />
      <path d="M752 375L850 473M776 355L873 452" />
    </g>
    <path d="M841 343V764a15 15 0 01-15 15H766a15 15 0 01-15-15V680" fill="none" stroke="#0a8aff" strokeWidth="11.500" />
    {bars.map(([x, y]) => (
      <g key={`${x}-${y}`}>
        <circle cx={x} cy={y} r="9" fill="#d8b71c" stroke="#ffe025" strokeWidth="3" />
        <text x={x} y={y + 5} textAnchor="middle" fontSize="15" fontWeight="bold" fontFamily="Liberation Serif" fill="#000">12</text>
      </g>
    ))}
    <g fill="#fff" fontFamily="Liberation Serif, serif" fontSize="72">
      <text x="523" y="590">300</text>
      <text x="1129" y="549">250</text>
      <text x="979" y="800">50</text>
      <text x="911" y="893">100</text>
    </g>
    <g fill="none" stroke="#00ff00" strokeWidth="2.500">
      <path d="M712 215v81M1048 215v81M712 245h336M743 215l-66 66M1078 215l-65 66" />
      <path d="M644 312v506M593 312h101M593 817h101M609 277l71 71M609 781l71 72" />
      <path d="M1114 312v421M1064 312h102M1064 733h102M1079 277l72 71M1079 698l72 70" />
      <path d="M946.500 733v84M897 733h100M897 817h100M914 701l68 67M911 781l71 71" />
      <path d="M880 800h168M879.500 750v141M1048 750v101M916 766l-71 71M1084 766l-71 71" />
      <path d="M712 885h168M712 833v58M747 850l-43 41M916 850l-43 41" />
    </g>
  </svg>
);

const Dialog = () => {
  const length = useRef<HTMLInputElement>(null);
  useEffect(() => {
    length.current?.focus();
    length.current?.select();
  }, []);
  const sep = <div className="h-8 w-px bg-[#c9c9c9]" />;
  return (
    <div role="dialog" aria-label="截面编辑" className="absolute top-[138px] right-[413px] left-[324px] bg-[#bfc6d0] shadow-[1px_1px_4px_rgba(0,0,0,0.7)]">
      <div className="flex h-[34px] items-center justify-between bg-[#2c7fe2] pr-[13px] pl-[10px] text-white">
        <span>截面编辑</span>
        <button aria-label="关闭"><svg viewBox="0 0 10 10" className="size-[10px]"><path d="M0 0l10 10M10 0L0 10" stroke="#fff" strokeWidth="2" /></svg></button>
      </div>
      <div className="mx-[2px] mt-[2px] flex h-[41px] items-center bg-[#eeeeee] pb-[2px] pl-[5px] text-[#444]">
        <button>选择</button>
        <div className="mr-[11px] ml-3">{sep}</div>
        <label className="flex items-center gap-[5px] text-[#222]"><input type="radio" name="bar" className="size-[17px] appearance-none rounded-full border border-[#999] bg-white" />纵筋</label>
        <label className="ml-[30px] flex items-center gap-[5px] text-[#222]"><input type="radio" name="bar" defaultChecked className="size-[17px] appearance-none rounded-full border border-[#999] bg-[radial-gradient(circle,#3d93f5_4px,#fff_5px)]" />箍筋</label>
        <div className="mr-3 ml-2">{sep}</div>
        <button className="flex items-center gap-1.5">直线<Caret /></button>
        <button className="ml-[11px]">隐藏标注</button>
        <button className="ml-3 text-[#b0b0b0]" disabled>删除</button>
        <button className="ml-[13px]">清空钢筋</button>
        <div className="mr-3 ml-3">{sep}</div>
        <button>编辑弯钩</button>
        <button className="ml-[10px] h-[30px] rounded border border-[#5aa2f2] bg-[#e4f1fe] px-[2px] text-[#1b78e4]">编辑端头</button>
      </div>
      <div className="relative mx-[2px]">
        <Drawing />
        <label className="absolute top-1 left-[3px] flex h-12 items-center border border-[#c4cccd] bg-[#e0e9ea] pr-[7px] pl-[10px] text-[#222]">
          钢筋信息:
          <span className="relative ml-2 h-8 w-[168px] border-2 border-[#b6b6b6] bg-white">
            <select className="size-full appearance-none pl-[7px] text-[#555] outline-none"><option>C6@150</option></select>
            <Caret className="pointer-events-none absolute top-3 right-[6px]" />
          </span>
        </label>
        <input ref={length} defaultValue="200" aria-label="长度" className="absolute top-[161px] left-[465px] h-8 w-[99px] border border-[#6f93d4] bg-white pl-[2px] outline-none selection:bg-[#0a78d6] selection:text-white" />
      </div>
      <div className="mx-[2px] flex h-[37px] items-center bg-[#dddddf] pl-[2px] text-[#333]">
        <button className="flex h-[33px] w-[31px] items-center justify-center border border-[#9a9a9a] bg-[#cfcfcf]" aria-label="正交"><Icon name="ortho" className="size-[18px]" /></button>
        <button className="flex h-[33px] w-[31px] items-center justify-center border border-[#3f9bf5] bg-white" aria-label="最近点"><Icon name="nearLine" /></button>
        <button className="flex h-[33px] w-[31px] items-center justify-center border border-[#3f9bf5] bg-white" aria-label="垂点"><Icon name="perp" /></button>
        <button className="flex h-[33px] w-[31px] items-center justify-center border border-[#c0c0c0] bg-[#fbfbfb]" aria-label="动态输入"><Icon name="dynOff" /></button>
        <span className="ml-px">(X: 278 Y: 747)请左键选择线筋,按 ESC 取消命令;</span>
        <svg viewBox="0 0 10 10" className="mt-auto mr-[5px] mb-1 ml-auto size-[10px]"><path d="M8 0h2v2H8zM4 4h2v2H4zM8 4h2v2H8zM0 8h2v2H0zM4 8h2v2H4zM8 8h2v2H8z" fill="#777" /></svg>
      </div>
      <div className="h-[3px]" />
    </div>
  );
};

const StatusBar = () => (
  <footer className="flex h-8 items-center bg-[#dddddf] pt-[3px] pl-[2px] whitespace-nowrap text-[#444]">
    <span className="w-[329px]">X = 23096 Y = 38994</span>
    <span className="w-[104px]">层高： 3</span>
    <span className="w-[50px]">标高：</span>
    <span className="w-[117px]">12.6~15.6</span>
    <span className="w-[127px]">1(1)</span>
    <span className="w-[130px]">隐藏：0</span>
    <div className="flex items-end gap-[5px] self-stretch *:h-full">
      <button className="flex w-[30px] items-center justify-center border border-[#a5a5a5] bg-[#cfcfcf]" aria-label="正交"><Icon name="ortho" className="size-[18px]" /></button>
      <button className="flex w-[43px] items-center justify-center gap-2 border border-[#3f9bf5] bg-white" aria-label="捕捉"><Icon name="snapBox" /><Caret /></button>
      <button className="ml-[3px] flex w-[31px] items-center justify-center border border-[#b5b5b5] bg-[#cfcfcf]" aria-label="交点"><Icon name="cross" /></button>
      <button className="ml-[3px] flex w-[44px] items-center justify-center gap-2 border border-[#3f9bf5] bg-white" aria-label="角度"><Icon name="angle" /><Caret /></button>
      <button className="flex w-[44px] items-center justify-center gap-2 border border-[#a5a5a5] bg-[#cfcfcf]" aria-label="动态输入"><Icon name="dyn" /><Caret /></button>
      <button className="border border-[#a5a5a5] bg-[#cfcfcf] px-[6px]">跨图层选择</button>
      <button className="border border-[#a5a5a5] bg-[#cfcfcf] px-[6px]">折线选择</button>
    </div>
    <span className="ml-2 text-[#333]">按鼠标左键指定第一个角点，或拾取构件图元</span>
    <span className="mr-[33px] ml-auto">1000 FPS</span>
  </footer>
);

export default function App() {
  return (
    <div className="relative flex h-screen flex-col overflow-hidden bg-white font-['Noto_Sans','Noto_Sans_CJK_SC',sans-serif] text-[15px] leading-5 text-[#222]">
      <Header />
      <Ribbon />
      <div className="flex h-[34px] shrink-0 items-center gap-[3px] border-b-2 border-[#9da0a5] bg-[#c9ccd1] pl-[3px]">
        <Combo label="楼层" value="大屋面" className="w-[124px] border-[#a8abb0]" />
        <Combo label="构件类别" value="柱" className="w-[125px] border-[#5b8fe0]" />
        <Combo label="构件类型" value="构造柱" className="w-[125px] border-[#a8abb0]" />
      </div>
      <main className="flex min-h-0 flex-1">
        <NavTree />
        <div className="w-[6px]" />
        <Lists />
        <div className="w-[5px]" />
        <div className="flex min-w-0 flex-1 flex-col">
          <Viewport />
          <RebarTable />
        </div>
      </main>
      <StatusBar />
      <Dialog />
      <div className="absolute top-[89px] right-0 h-[72px] w-[9px] rounded-l border-2 border-r-0 border-[#666] bg-[repeating-linear-gradient(to_bottom,#3fd267_0px,#3fd267_3px,#2a8545_3px,#2a8545_4px)]">
        <div className="h-5 bg-[#666]" />
      </div>
    </div>
  );
}
